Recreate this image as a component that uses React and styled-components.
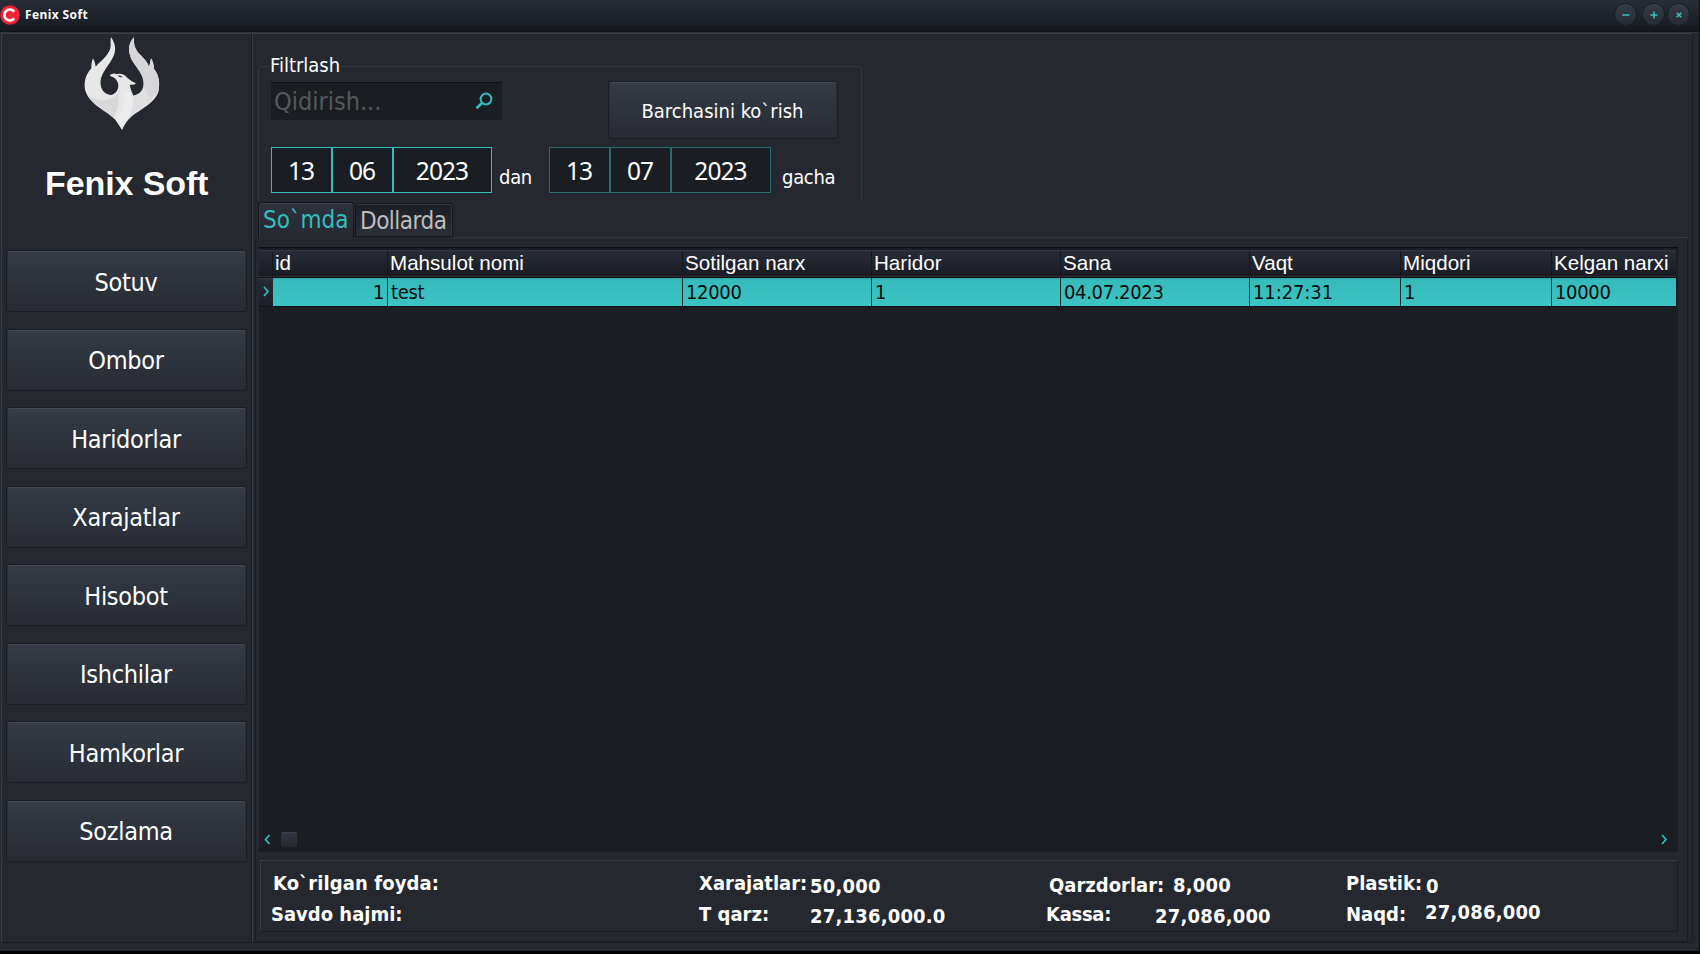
import React from "react";
import styled, { createGlobalStyle, css } from "styled-components";

const TEAL = "#35bdbc";
const UI = '"DejaVu Sans Condensed", "DejaVu Sans", sans-serif';
const NOTO = '"Noto Sans", sans-serif';
const ARIAL = '"Liberation Sans", Arial, sans-serif';

const GlobalStyle = createGlobalStyle`
  * { box-sizing: border-box; }
  body { margin: 0; background: #020303; overflow: hidden; font-family: ${UI}; color: #fff; }
  button { border: 0; padding: 0; margin: 0; color: inherit; font: inherit; }
`;

const Window = styled.div`
  width: 1700px;
  height: 951px;
  display: flex;
  flex-direction: column;
  background: #25282f;
  border-right: 1px solid #0c0d10;
`;

const TitleBar = styled.header`
  height: 33px;
  flex: none;
  display: flex;
  align-items: flex-start;
  background: linear-gradient(#292d37, #1d2129 60%, #15181d 31px, #0e1013 32px);
  border-bottom: 1px solid #30343d;
  padding-right: 9px;
`;

const AppIcon = styled.svg`
  margin: 5px 0 0 0;
  flex: none;
`;

const WindowTitle = styled.div`
  flex: 1;
  margin: 5px 0 0 5px;
  font: bold 12px/19px ${NOTO};
  letter-spacing: 0.4px;
`;

const RoundButton = styled.button`
  width: 23px;
  height: 23px;
  margin: 3px 0 0 ${(p) => p.$gap}px;
  border-radius: 50%;
  border: 1px solid #191c21;
  background: linear-gradient(#353b46, #272b33);
  box-shadow: inset 0 1px 0 #3e4550;
  display: flex;
  align-items: center;
  justify-content: center;
`;

const Body = styled.div`
  height: 910px;
  display: flex;
`;

const Sidebar = styled.aside`
  width: 251px;
  margin-left: 1px;
  border-left: 1px solid #393d47;
  border-top: 1px solid #393d47;
  border-right: 1px solid #1a1d21;
  border-bottom: 1px solid #1a1d21;
  display: flex;
  flex-direction: column;
`;

const Logo = styled.svg`
  margin: 2px 0 0 81px;
  flex: none;
`;

const Brand = styled.h1`
  margin: 30px 0 0 43px;
  font: bold 34px/40px ${ARIAL};
  letter-spacing: -0.1px;
  height: 40px;
`;

const Menu = styled.nav`
  margin: 47px 0 0 4px;
  width: 241px;
  height: 612px;
  display: flex;
  flex-direction: column;
  justify-content: space-between;
`;

const raised = css`
  background: linear-gradient(#363b46, #303740 25%, #2a2d36 85%, #292c34);
  border: 1px solid #1a1d21;
  border-radius: 3px;
  box-shadow: inset 0 1px 0 #444a55, inset 1px 0 0 #2a2f37, inset -1px 0 0 #2a2f37;
`;

const MenuButton = styled.button`
  ${raised}
  height: 62px;
  font: 25px/30px ${UI};
  letter-spacing: -0.3px;
  padding: 3px 1px 0 0;
`;

const Main = styled.main`
  width: 1441px;
  border-left: 1px solid #393d47;
  border-top: 1px solid #393d47;
  border-right: 1px solid #1a1d21;
  border-bottom: 1px solid #1a1d21;
  display: flex;
  flex-direction: column;
`;

const FilterBox = styled.section`
  width: 604px;
  height: 135px;
  margin: 32px 0 0 5px;
  border: 1px solid #353944;
  border-bottom: 0;
  border-radius: 5px 5px 0 0;
  padding-left: 12px;
`;

const Legend = styled.div`
  width: 71px;
  margin-top: -15px;
  margin-left: -1px;
  height: 29px;
  background: #25282f;
  font: 20px/26px ${UI};
  letter-spacing: 0;
  white-space: nowrap;
`;

const FilterRow = styled.div`
  display: flex;
  align-items: flex-start;
  height: ${(p) => p.$height}px;
`;

const SearchField = styled.label`
  width: 231px;
  height: 38px;
  margin-top: 1px;
  background: #1a1d21;
  border-top: 1px solid #0d0f11;
  display: flex;
  align-items: center;
  justify-content: space-between;
  padding: 0 9px 0 3px;
  color: #56585b;
  font: 25px/34px ${UI};
`;

const SearchIcon = styled.svg`
  margin-bottom: 2px;
`;

const ShowAll = styled.button`
  ${raised}
  width: 230px;
  height: 58px;
  margin-left: 106px;
  font: 20px/26px ${UI};
  padding: 1px 1px 0 0;
`;

const DateBox = styled.div`
  width: ${(p) => p.$width}px;
  height: 46px;
  display: grid;
  grid-template-columns: 61px 61px 1fr;
  border: 1px solid ${(p) => p.$line};
  background: #1a1d21;
`;

const DatePart = styled.span`
  display: flex;
  align-items: center;
  justify-content: center;
  font: 24.5px/34px ${NOTO};
  letter-spacing: -0.95px;
  padding: 1px 1px 0 0;
  border-right: 2px solid ${(p) => p.$line};
  &:last-child { border-right: 0; }
`;

const Word = styled.span`
  width: ${(p) => p.$width}px;
  padding-left: ${(p) => p.$left}px;
  padding-top: 18px;
  font: 20px/24px ${UI};
  letter-spacing: -0.3px;
`;

const Tabs = styled.div`
  display: flex;
  align-items: flex-end;
  height: 37px;
  margin-left: 5px;
  width: 1430px;
`;

const Tab = styled.div`
  width: ${(p) => (p.$active ? 96 : 98)}px;
  height: ${(p) => (p.$active ? 36 : 34)}px;
  margin: ${(p) => (p.$active ? "0" : "0 0 1px 1px")};
  border: 1px solid #15181b;
  border-bottom: ${(p) => (p.$active ? "0" : "1px solid #15181b")};
  border-radius: 3px 3px 0 0;
  background: ${(p) => (p.$active ? "linear-gradient(#2e323c, #25282f)" : "linear-gradient(#1b1e24, #2b2f38)")};
  box-shadow: inset 0 1px 0 #3a3e49, inset ${(p) => (p.$active ? 1 : -1)}px 0 0 #343842;
  color: ${(p) => (p.$active ? TEAL : "#bdbdbd")};
  font: 24px/${(p) => (p.$active ? 32 : 31)}px ${UI};
  letter-spacing: ${(p) => (p.$active ? -0.05 : -0.5)}px;
  padding: ${(p) => (p.$active ? 1 : 2)}px 0 0 4px;
  white-space: nowrap;
`;

const TabRule = styled.div`
  flex: 1;
  height: 1px;
  background: #353944;
`;

const Page = styled.section`
  flex: 1;
  width: 1433px;
  margin-left: 2px;
  border-left: 1px solid #1a1d21;
  border-right: 1px solid #1a1d21;
  border-bottom: 1px solid #1a1d21;
  padding: 9px 0 0 3px;
`;

const Grid = styled.div`
  width: 1419px;
  height: 605px;
  background: #1a1d21;
  border-top: 1px solid #0d0f11;
  padding-top: 2px;
  display: flex;
  flex-direction: column;
`;

const columns = "14px 115px 295px 189px 189px 189px 151px 151px 124px";

const HeadRow = styled.div`
  display: grid;
  grid-template-columns: ${columns};
  width: 1417px;
  height: 28px;
  background: linear-gradient(#282c36, #1b1e26 80%, #191c22);
  border-top: 1px solid #353944;
  border-bottom: 1px solid #0d0f11;
  box-shadow: inset 0 -1px 0 #2b2f38;
`;

const HeadCell = styled.span`
  font: 20.6px/24px ${ARIAL};
  padding-left: 2px;
  border-right: 1px solid #15181d;
  white-space: nowrap;
  &:last-child { border-right: 0; }
`;

const DataRow = styled.div`
  display: grid;
  grid-template-columns: ${columns};
  width: 1417px;
  height: 29px;
  border-bottom: 1px solid #101214;
`;

const DataCell = styled.span`
  background: linear-gradient(#2fa7a7, #36bbbb 2px, #3cc3c3);
  color: #080c0c;
  border-right: 1px solid #22282c;
  font: 20px/28px ${UI};
  letter-spacing: ${(p) => p.$track || -0.35}px;
  padding: 0 3px;
  height: 28px;
  text-align: ${(p) => (p.$right ? "right" : "left")};
  &:last-child { border-right: 0; }
`;

const RowMarker = styled.span`
  display: flex;
  align-items: center;
  padding: 0 0 2px 4px;
  background: linear-gradient(#282c36, #1b1e26);
  border-top: 1px solid #353944;
`;

const ScrollBar = styled.div`
  margin-top: auto;
  height: 26px;
  display: flex;
  align-items: center;
  padding: 0 10px 0 5px;
`;

const Thumb = styled.div`
  width: 16px;
  height: 15px;
  margin: 0 auto 0 10px;
  border-radius: 2px;
  background: linear-gradient(#31353f, #262a31);
  border-top: 1px solid #3c414b;
`;

const Summary = styled.footer`
  width: 1418px;
  height: 72px;
  margin-top: 8px;
  margin-left: 1px;
  border: 1px solid #1a1d21;
  border-top-color: #3a3e48;
  border-left-color: #3a3e48;
  display: grid;
  grid-template-columns: 438px 111px 237px 125px 173px 80px 1fr;
  grid-template-rows: 31px 31px;
  padding-top: 10px;
`;

const Stat = styled.span`
  font: bold 20px/24px ${UI};
  white-space: nowrap;
  margin-left: ${(p) => p.$x || 0}px;
  margin-top: ${(p) => p.$y || 0}px;
  letter-spacing: ${(p) => p.$track || 0}px;
`;

function Chevron({ left }) {
  return (
    <svg width="7" height="11" viewBox="0 0 7 11" fill="none" stroke={TEAL} strokeWidth="1.7">
      <path d={left ? "M5.5 1 1.5 5.5l4 4.5" : "M1 1l4 4.5L1 10"} />
    </svg>
  );
}

function Phoenix() {
  return (
    <Logo width="79" height="97" viewBox="248 108 237 291">
      <path
        fill="#e7e7e8"
        d="M332 111C344 129 348 146 341 165C333 187 309 210 302 235C296 264 309 283 333 285C350 281 358 263 352 247C349 237 341 231 328 227C333 220 343 219 350 223C360 219 373 224 381 233C389 240 398 246 407 250C402 255 395 255 388 254C391 265 393 274 399 287C419 284 431 270 430 250C429 222 408 204 395 181C382 155 383 130 401 112C399 135 405 149 418 163C431 176 443 188 446 201C449 193 451 184 452 175C458 185 461 197 461 207C475 224 479 247 475 270C467 310 419 327 391 352C380 362 371 375 365 389C358 375 349 362 337 352C309 328 263 309 254 268C250 243 257 223 273 205C273 194 274 185 278 175C283 184 285 193 286 200C304 180 331 162 331 136C331 126 330 119 332 111Z"
      />
      <path fill="#d6d6d9" d="M401 112C383 130 382 155 395 181C408 204 433 220 430 250L440 292C452 300 471 290 475 270C479 247 475 224 461 207C461 197 458 185 452 175L446 201C443 188 431 176 418 163C405 149 399 135 401 112Z" />
      <path fill="#dfdfe1" d="M430 250C431 270 419 284 399 287C401 310 395 330 384 358C410 326 467 310 475 270C462 296 440 304 442 285Z" />
      <path fill="#d9d9da" d="M262 286C294 308 335 305 354 277C357 302 354 329 340 354C319 334 279 313 262 286Z" />
      <path fill="#ececec" d="M367 267C379 293 374 330 346 360L365 389C371 375 380 362 384 352C398 326 401 304 397 283Z" />
      <path fill="#25282f" d="M352 227c6-2 11 0 15 5-6 0-11-1-15-5Z" />
    </Logo>
  );
}

function DateInput({ parts, line, width }) {
  return (
    <DateBox $line={line} $width={width}>
      {parts.map((part) => (
        <DatePart key={part} $line={line}>{part}</DatePart>
      ))}
    </DateBox>
  );
}

const MENU = ["Sotuv", "Ombor", "Haridorlar", "Xarajatlar", "Hisobot", "Ishchilar", "Hamkorlar", "Sozlama"];
const HEAD = ["id", "Mahsulot nomi", "Sotilgan narx", "Haridor", "Sana", "Vaqt", "Miqdori", "Kelgan narxi"];
const ROW = ["1", "test", "12000", "1", "04.07.2023", "11:27:31", "1", "10000"];

export default function App() {
  return (
    <>
      <GlobalStyle />
      <Window>
        <TitleBar>
          <AppIcon width="20" height="20" viewBox="0 0 20 20">
            <circle cx="10" cy="10" r="9.8" fill="#ee2336" />
            <path d="M14.2 6.6A5.5 5.5 0 1 0 14.2 13.4" fill="none" stroke="#fff" strokeWidth="2.7" />
          </AppIcon>
          <WindowTitle>Fenix Soft</WindowTitle>
          <RoundButton $gap={0}>
            <svg width="8" height="8" viewBox="0 0 8 8" stroke={TEAL} strokeWidth="1.6"><path d="M.5 4h7" /></svg>
          </RoundButton>
          <RoundButton $gap={5}>
            <svg width="8" height="8" viewBox="0 0 8 8" stroke={TEAL} strokeWidth="1.6"><path d="M.5 4h7M4 .5v7" /></svg>
          </RoundButton>
          <RoundButton $gap={2}>
            <svg width="8" height="8" viewBox="0 0 8 8" stroke={TEAL} strokeWidth="1.6"><path d="M1.7 1.7l4.6 4.6M6.3 1.7 1.7 6.3" /></svg>
          </RoundButton>
        </TitleBar>
        <Body>
          <Sidebar>
            <Phoenix />
            <Brand>Fenix Soft</Brand>
            <Menu>
              {MENU.map((name) => (
                <MenuButton key={name}>{name}</MenuButton>
              ))}
            </Menu>
          </Sidebar>
          <Main>
            <FilterBox>
              <Legend>Filtrlash</Legend>
              <FilterRow $height={66}>
                <SearchField>
                  <span>Qidirish...</span>
                  <SearchIcon width="18" height="18" viewBox="0 0 18 18" fill="none" stroke={TEAL}>
                    <circle cx="11" cy="7" r="5.4" strokeWidth="2" />
                    <path d="M7 11 1.5 16.3" strokeWidth="2.6" />
                  </SearchIcon>
                </SearchField>
                <ShowAll>Barchasini ko`rish</ShowAll>
              </FilterRow>
              <FilterRow $height={46}>
                <DateInput parts={["13", "06", "2023"]} line={TEAL} width={221} />
                <Word $width={57} $left={7}>dan</Word>
                <DateInput parts={["13", "07", "2023"]} line="#276b6d" width={222} />
                <Word $width={70} $left={11}>gacha</Word>
              </FilterRow>
            </FilterBox>
            <Tabs>
              <Tab $active>So`mda</Tab>
              <Tab>Dollarda</Tab>
              <TabRule />
            </Tabs>
            <Page>
              <Grid>
                <HeadRow>
                  <HeadCell />
                  {HEAD.map((name) => <HeadCell key={name}>{name}</HeadCell>)}
                </HeadRow>
                <DataRow>
                  <RowMarker><Chevron /></RowMarker>
                  {ROW.map((value, i) => (
                    <DataCell key={i} $right={i === 0} $track={i === 5 ? -0.1 : undefined}>{value}</DataCell>
                  ))}
                </DataRow>
                <ScrollBar>
                  <Chevron left />
                  <Thumb />
                  <Chevron />
                </ScrollBar>
              </Grid>
              <Summary>
                <Stat $x={12} $track={0.1}>Ko`rilgan foyda:</Stat>
                <Stat>Xarajatlar:</Stat>
                <Stat $y={3} $track={0.2}>50,000</Stat>
                <Stat $x={2} $y={2}>Qarzdorlar:</Stat>
                <Stat $x={1} $y={2} $track={0.2}>8,000</Stat>
                <Stat $x={1}>Plastik:</Stat>
                <Stat $x={1} $y={3}>0</Stat>
                <Stat $x={10}>Savdo hajmi:</Stat>
                <Stat>T qarz:</Stat>
                <Stat $y={2} $track={0.2}>27,136,000.0</Stat>
                <Stat $x={-1} $track={-0.3}>Kassa:</Stat>
                <Stat $x={-17} $y={2} $track={0.2}>27,086,000</Stat>
                <Stat $x={1}>Naqd:</Stat>
                <Stat $y={-2} $track={0.2}>27,086,000</Stat>
              </Summary>
            </Page>
          </Main>
        </Body>
      </Window>
    </>
  );
}
